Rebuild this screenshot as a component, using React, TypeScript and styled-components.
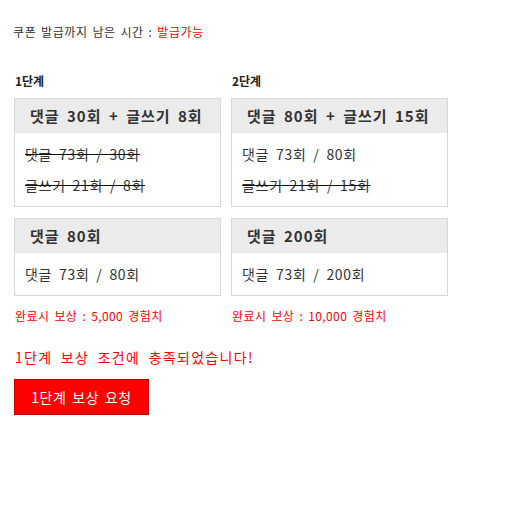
import React from "react";
import styled, { createGlobalStyle } from "styled-components";

const GlobalStyle = createGlobalStyle`
  body {
    margin: 0;
    background: #ffffff;
    font-family: "Noto Sans CJK KR", "Noto Sans", sans-serif;
    color: #333333;
  }
`;

const Page = styled.div`
  padding: 24px 14px 0;
`;

const TimerLine = styled.div`
  font-size: 12px;
  line-height: 16px;
  letter-spacing: 0.6px;
  word-spacing: 1.5px;
  color: #333333;
  margin-left: -1px;
`;

const Red = styled.span`
  color: #ff0000;
`;

const Stages = styled.div`
  display: grid;
  grid-template-columns: 207px 217px;
  column-gap: 10px;
  margin-top: 33px;
`;

const Stage = styled.div`
  display: flex;
  flex-direction: column;
`;

const StageTitle = styled.div`
  font-size: 12px;
  line-height: 16px;
  font-weight: 700;
  color: #222222;
  margin: 0 0 9px 1px;
`;

const Mission = styled.div<{ $gap?: boolean }>`
  border: 1px solid #d6d6d6;
  margin-top: ${(p) => (p.$gap ? "11px" : "0")};
`;

const MissionHead = styled.div`
  background: #ebebeb;
  height: 34px;
  line-height: 34px;
  padding-left: 15px;
  font-size: 15px;
  font-weight: 700;
  color: #333333;
  letter-spacing: 1px;
  word-spacing: 3px;
  white-space: nowrap;
`;

const MissionBody = styled.div`
  padding: 6px 10px 5px;
`;

const Progress = styled.div<{ $done?: boolean }>`
  font-size: 14px;
  line-height: 31px;
  color: #333333;
  letter-spacing: 0.7px;
  word-spacing: 3px;
  white-space: nowrap;
  text-decoration: ${(p) => (p.$done ? "line-through" : "none")};
  text-decoration-color: #111111;
`;

const Reward = styled.div`
  font-size: 12px;
  line-height: 16px;
  color: #ff0000;
  margin: 12px 0 0 1px;
  letter-spacing: 0.4px;
  word-spacing: 2px;
  white-space: nowrap;
`;

const Notice = styled.div`
  font-size: 14px;
  line-height: 20px;
  color: #ff0000;
  margin: 23px 0 0 1px;
  letter-spacing: 1.3px;
  word-spacing: 4px;
`;

const RequestButton = styled.button`
  margin-top: 12px;
  width: 135px;
  height: 36px;
  background: #ff0000;
  border: 1px solid #c40000;
  color: #ffffff;
  font-family: "Noto Sans CJK KR", "Noto Sans", sans-serif;
  font-size: 14px;
  letter-spacing: 0.6px;
  word-spacing: 2px;
  padding: 0;
  cursor: pointer;
`;

interface Task {
  label: string;
  done: boolean;
}

interface MissionData {
  title: string;
  tasks: Task[];
}

interface StageData {
  name: string;
  missions: MissionData[];
  reward: string;
}

const stages: StageData[] = [
  {
    name: "1단계",
    missions: [
      {
        title: "댓글 30회 + 글쓰기 8회",
        tasks: [
          { label: "댓글 73회 / 30회", done: true },
          { label: "글쓰기 21회 / 8회", done: true },
        ],
      },
      {
        title: "댓글 80회",
        tasks: [{ label: "댓글 73회 / 80회", done: false }],
      },
    ],
    reward: "완료시 보상 : 5,000 경험치",
  },
  {
    name: "2단계",
    missions: [
      {
        title: "댓글 80회 + 글쓰기 15회",
        tasks: [
          { label: "댓글 73회 / 80회", done: false },
          { label: "글쓰기 21회 / 15회", done: true },
        ],
      },
      {
        title: "댓글 200회",
        tasks: [{ label: "댓글 73회 / 200회", done: false }],
      },
    ],
    reward: "완료시 보상 : 10,000 경험치",
  },
];

const App: React.FC = () => {
  return (
    <>
      <GlobalStyle />
      <Page>
        <TimerLine>
          쿠폰 발급까지 남은 시간 : <Red>발급가능</Red>
        </TimerLine>

        <Stages>
          {stages.map((stage) => (
            <Stage key={stage.name}>
              <StageTitle>{stage.name}</StageTitle>
              {stage.missions.map((mission, i) => (
                <Mission key={mission.title} $gap={i > 0}>
                  <MissionHead>{mission.title}</MissionHead>
                  <MissionBody>
                    {mission.tasks.map((task) => (
                      <Progress key={task.label} $done={task.done}>
                        {task.label}
                      </Progress>
                    ))}
                  </MissionBody>
                </Mission>
              ))}
              <Reward>{stage.reward}</Reward>
            </Stage>
          ))}
        </Stages>

        <Notice>1단계 보상 조건에 충족되었습니다!</Notice>
        <RequestButton type="button">1단계 보상 요청</RequestButton>
      </Page>
    </>
  );
};

export default App;
